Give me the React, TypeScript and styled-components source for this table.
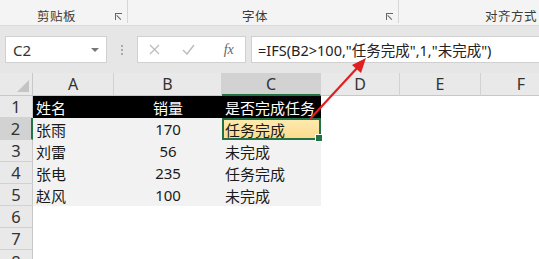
import React from 'react';
import styled, { createGlobalStyle } from 'styled-components';

const excelGreen = '#217346';
const font = `"Noto Sans", "Noto Sans CJK SC", sans-serif`;

const GlobalStyle = createGlobalStyle`
  html, body {
    margin: 0;
    padding: 0;
    width: 539px;
    height: 259px;
    overflow: hidden;
    background: #ffffff;
    font-family: ${font};
  }
`;

const Page = styled.div`
  position: relative;
  width: 539px;
  height: 259px;
  overflow: hidden;
  display: flex;
  flex-direction: column;
`;

/* ribbon group captions */
const Ribbon = styled.div`
  height: 26px;
  background: #f4f4f4;
  border-bottom: 1px solid #dcdcdc;
  box-sizing: border-box;
  display: flex;
  flex-shrink: 0;
`;

const Group = styled.div<{ $w: number; $pad: number; $last?: boolean }>`
  width: ${(p) => p.$w}px;
  flex-shrink: 0;
  position: relative;
  border-right: ${(p) => (p.$last ? 'none' : '1px solid #d6d6d6')};
  height: 23px;
  display: flex;
  align-items: center;
  padding: 7px 0 0 ${(p) => p.$pad}px;
  box-sizing: border-box;
  font-size: 12.5px;
  color: #3b3b3b;
  letter-spacing: 0.5px;
  white-space: nowrap;
`;

const Launcher = styled.span`
  position: absolute;
  right: 5px;
  top: 13px;
  width: 7px;
  height: 7px;
  border-left: 1px solid #666;
  border-top: 1px solid #666;
  box-sizing: border-box;
  &::after {
    content: '';
    position: absolute;
    left: 1px;
    top: 1px;
    width: 6px;
    height: 1px;
    background: #666;
    transform: rotate(45deg);
    transform-origin: left top;
  }
`;

/* name box + formula input */
const FormulaArea = styled.div`
  height: 47px;
  background: #e6e6e6;
  display: flex;
  align-items: flex-start;
  padding: 10px 0 0 5px;
  box-sizing: border-box;
  flex-shrink: 0;
`;

const NameBox = styled.div`
  width: 102px;
  height: 27px;
  background: #fff;
  border: 1px solid #d0d0d0;
  box-sizing: border-box;
  display: flex;
  align-items: center;
  justify-content: space-between;
  padding: 0 7px 0 7px;
  font-size: 15px;
  color: #333;
`;

const Caret = styled.span`
  width: 0;
  height: 0;
  border-left: 4px solid transparent;
  border-right: 4px solid transparent;
  border-top: 4px solid #777;
`;

const Grip = styled.div`
  width: 30px;
  height: 27px;
  display: flex;
  flex-direction: column;
  align-items: center;
  justify-content: center;
  gap: 2px;
  span {
    width: 2px;
    height: 2px;
    background: #aaa;
  }
`;

const ButtonsBox = styled.div`
  width: 109px;
  height: 27px;
  background: #fff;
  border: 1px solid #d0d0d0;
  box-sizing: border-box;
  display: flex;
  align-items: center;
  justify-content: space-around;
  color: #bdbdbd;
  margin-right: 5px;
`;

const Fx = styled.span`
  font-family: "Liberation Serif", serif;
  font-style: italic;
  font-size: 14px;
  color: #666;
  margin-left: 6px;
`;

const FormulaInput = styled.div`
  flex: 1;
  height: 27px;
  background: #fff;
  border: 1px solid #d0d0d0;
  border-right: none;
  box-sizing: border-box;
  display: flex;
  align-items: center;
  padding-left: 6px;
  font-size: 14.5px;
  color: #222;
  white-space: nowrap;
`;

/* worksheet */
const Sheet = styled.div`
  display: grid;
  grid-template-columns: 33px 81px 108px 99px 79px 81px 81px;
  grid-template-rows: 23px repeat(7, 22px);
  background: #fff;
`;

const Corner = styled.div`
  background: #e9e9e9;
  border-right: 1px solid #c8c8c8;
  border-bottom: 1px solid #c8c8c8;
  box-sizing: border-box;
  position: relative;
  &::after {
    content: '';
    position: absolute;
    right: 3px;
    bottom: 3px;
    border-left: 12px solid transparent;
    border-bottom: 12px solid #c4c4c4;
  }
`;

const ColHead = styled.div<{ $sel?: boolean }>`
  background: ${(p) => (p.$sel ? '#d2d2d2' : '#e9e9e9')};
  border-right: 1px solid #d2d2d2;
  border-bottom: ${(p) => (p.$sel ? `2px solid ${excelGreen}` : '1px solid #c8c8c8')};
  box-sizing: border-box;
  display: flex;
  align-items: center;
  justify-content: center;
  font-size: 16px;
  color: #333;
`;

const RowHead = styled.div<{ $sel?: boolean }>`
  background: ${(p) => (p.$sel ? '#d2d2d2' : '#e9e9e9')};
  border-right: ${(p) => (p.$sel ? `2px solid ${excelGreen}` : '1px solid #c8c8c8')};
  border-bottom: 1px solid #d2d2d2;
  box-sizing: border-box;
  display: flex;
  align-items: center;
  justify-content: center;
  font-size: 16.5px;
  color: #333;
`;

type Tone = 'head' | 'data' | 'empty';

const Cell = styled.div<{ $tone: Tone; $align?: 'left' | 'center' }>`
  background: ${(p) => (p.$tone === 'head' ? '#000' : p.$tone === 'data' ? '#f2f2f2' : '#fff')};
  color: ${(p) => (p.$tone === 'head' ? '#fff' : '#1a1a1a')};
  font-size: 15px;
  display: flex;
  align-items: center;
  justify-content: ${(p) => (p.$align === 'center' ? 'center' : 'flex-start')};
  padding-left: ${(p) => (p.$align === 'center' ? 0 : 3)}px;
  white-space: nowrap;
  position: relative;
`;

const ActiveCell = styled(Cell)`
  background: linear-gradient(180deg, #fde9ae 0%, #fcdc8e 100%);
  border: 2px solid ${excelGreen};
  box-sizing: border-box;
  padding-left: 1px;
  z-index: 2;
  &::after {
    content: '';
    position: absolute;
    right: -4px;
    bottom: -4px;
    width: 6px;
    height: 6px;
    background: ${excelGreen};
    border: 1px solid #fff;
  }
`;

const Arrow = styled.svg`
  position: absolute;
  left: 0;
  top: 0;
  pointer-events: none;
  z-index: 5;
`;

const rows: [string, string, string][] = [
  ['张雨', '170', '任务完成'],
  ['刘雷', '56', '未完成'],
  ['张电', '235', '任务完成'],
  ['赵风', '100', '未完成'],
];

const letters = ['A', 'B', 'C', 'D', 'E', 'F'];

export default function App() {
  return (
    <>
      <GlobalStyle />
      <Page>
        <Ribbon>
          <Group $w={128} $pad={37}>
            剪贴板
            <Launcher />
          </Group>
          <Group $w={271} $pad={114}>
            字体
            <Launcher />
          </Group>
          <Group $w={140} $pad={86} $last>
            对齐方式
          </Group>
        </Ribbon>

        <FormulaArea>
          <NameBox>
            C2
            <Caret />
          </NameBox>
          <Grip>
            <span />
            <span />
            <span />
          </Grip>
          <ButtonsBox>
            <svg width="11" height="11" viewBox="0 0 11 11">
              <path d="M1 1 L10 10 M10 1 L1 10" stroke="#bdbdbd" strokeWidth="1.3" />
            </svg>
            <svg width="13" height="11" viewBox="0 0 13 11">
              <path d="M1 6 L5 10 L12 1" stroke="#bdbdbd" strokeWidth="1.5" fill="none" />
            </svg>
            <Fx>fx</Fx>
          </ButtonsBox>
          <FormulaInput>=IFS(B2&gt;100,"任务完成",1,"未完成")</FormulaInput>
        </FormulaArea>

        <Sheet>
          <Corner />
          {letters.map((l) => (
            <ColHead key={l} $sel={l === 'C'}>
              {l}
            </ColHead>
          ))}

          <RowHead>1</RowHead>
          <Cell $tone="head">姓名</Cell>
          <Cell $tone="head" $align="center">销量</Cell>
          <Cell $tone="head">是否完成任务</Cell>
          <Cell $tone="empty" />
          <Cell $tone="empty" />
          <Cell $tone="empty" />

          {rows.map((r, i) => (
            <React.Fragment key={i}>
              <RowHead $sel={i === 0}>{i + 2}</RowHead>
              <Cell $tone="data">{r[0]}</Cell>
              <Cell $tone="data" $align="center">{r[1]}</Cell>
              {i === 0 ? (
                <ActiveCell $tone="data">{r[2]}</ActiveCell>
              ) : (
                <Cell $tone="data">{r[2]}</Cell>
              )}
              <Cell $tone="empty" />
              <Cell $tone="empty" />
              <Cell $tone="empty" />
            </React.Fragment>
          ))}

          {[6, 7, 8].map((n) => (
            <React.Fragment key={n}>
              <RowHead>{n}</RowHead>
              {letters.map((l) => (
                <Cell key={l} $tone="empty" />
              ))}
            </React.Fragment>
          ))}
        </Sheet>

        <Arrow width="539" height="259" viewBox="0 0 539 259">
          <line x1="310" y1="119" x2="358" y2="67" stroke="#e02020" strokeWidth="2.2" />
          <polygon points="366,58 352,65 361,73" fill="#e02020" />
        </Arrow>
      </Page>
    </>
  );
}
